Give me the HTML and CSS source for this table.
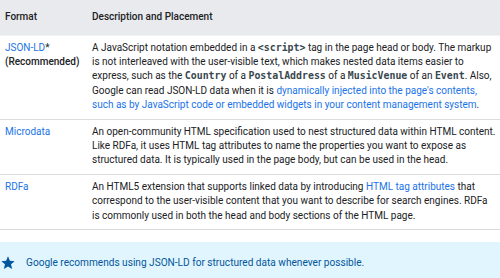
FILE: index.html
```html
<!DOCTYPE html>
<html lang="en">
<head>
  <meta charset="UTF-8">
  <title>Structured data formats</title>
  <link rel="stylesheet" href="styles.css">
</head>
<body>

  <table class="formats">
    <thead>
      <tr>
        <th class="col-format">Format</th>
        <th>Description and Placement</th>
      </tr>
    </thead>
    <tbody>
      <tr>
        <td class="col-format"><a href="#">JSON-LD</a>*<br><strong>(Recommended)</strong></td>
        <td>A JavaScript notation embedded in a <code>&lt;script&gt;</code> tag in the page head or body. The markup is not interleaved with the user-visible text, which makes nested data items easier to express, such as the <code>Country</code> of a <code>PostalAddress</code> of a <code>MusicVenue</code> of an <code>Event</code>. Also, Google can read JSON-LD data when it is <a href="#">dynamically injected into the page's contents, such as by JavaScript code or embedded widgets in your content management system</a>.</td>
      </tr>
      <tr>
        <td class="col-format"><a href="#">Microdata</a></td>
        <td>An open-community HTML specification used to nest structured data within HTML content. Like RDFa, it uses HTML tag attributes to name the properties you want to expose as structured data. It is typically used in the page body, but can be used in the head.</td>
      </tr>
      <tr>
        <td class="col-format"><a href="#">RDFa</a></td>
        <td>An HTML5 extension that supports linked data by introducing <a href="#">HTML tag attributes</a> that correspond to the user-visible content that you want to describe for search engines. RDFa is commonly used in both the head and body sections of the HTML page.</td>
      </tr>
    </tbody>
  </table>

  <!-- Nota -->
  <aside class="note">
    <svg class="note-icon" viewBox="0 0 24 24" width="16" height="16"><path d="M12 17.27L18.18 21l-1.64-7.03L22 9.24l-7.19-.61L12 2 9.19 8.63 2 9.24l5.46 4.73L5.82 21z"/></svg>
    <span>Google recommends using JSON-LD for structured data whenever possible.</span>
  </aside>

</body>
</html>
```

FILE: styles.css
```css
* { margin:0; padding:0; box-sizing:border-box; }
body {
  font-family:Roboto, 'Noto Sans', sans-serif;
  font-size:10px; line-height:14.4px;
  color:#202124;
  background:#fff;
}
a { color:#1a73e8; text-decoration:none; }
code {
  font-family:'DejaVu Sans Mono', monospace;
  font-size:9.9px; font-weight:600;
  line-height:1;
  color:#37474f;
}
strong { font-weight:500; }
/* Tabela */
.formats {
  width:100%;
  border-collapse:collapse;
}
.formats th {
  background:#e8eaed;
  font-weight:500; text-align:left;
  padding:10px 5px 10px 5px;
  height:35px;
}
.formats td {
  vertical-align:top;
  padding:5px 3.5px 6px 5px;
  border-bottom:1px solid #dadce0;
}
.formats tbody tr:first-child td { border-top:1px solid #f1f3f4; }
.col-format { width:87px; }
/* Nota */
.note {
  display:flex; align-items:center; gap:10px;
  margin-top:12px;
  padding:13px 8px 13px 0;
  background:#e1f5fe; color:#01579b;
  font-size:10.1px;
}
.note-icon { fill:#01579b; flex:none; }
```
